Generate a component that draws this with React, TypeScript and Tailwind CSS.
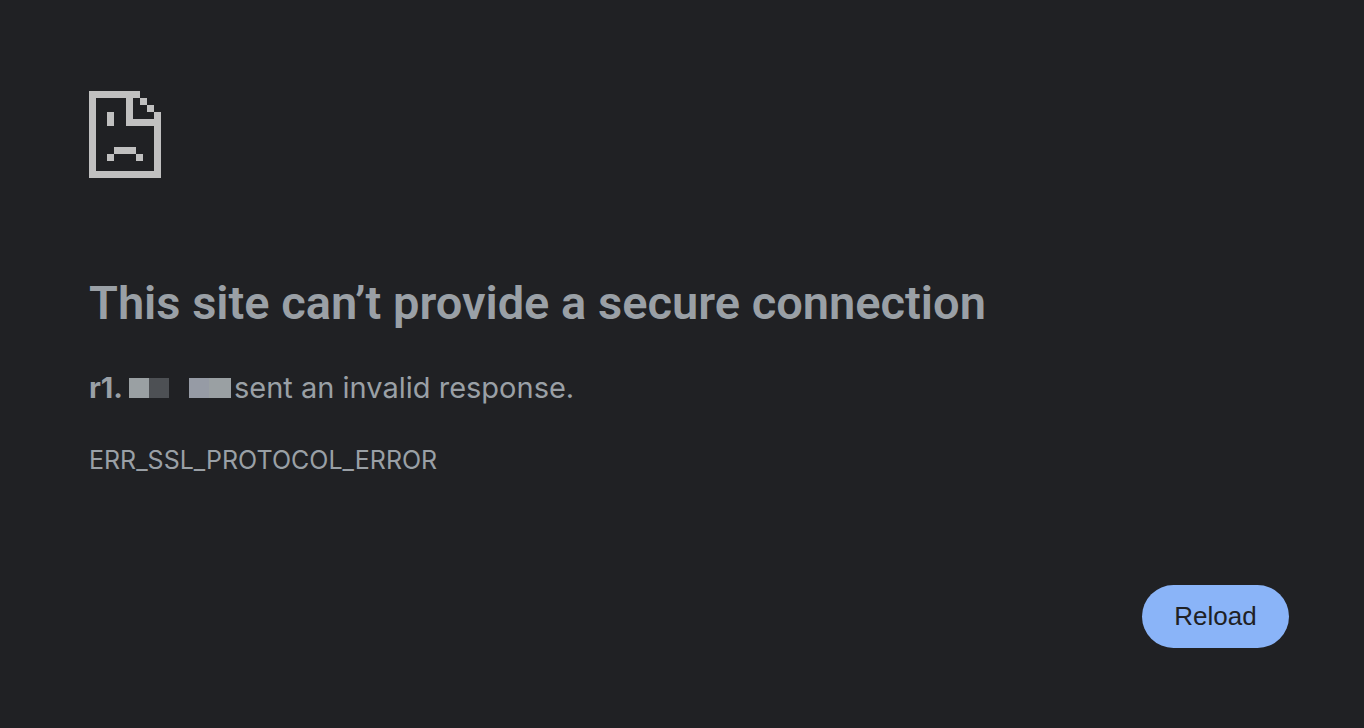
export default function App() {
  return (
    <main className="flex min-h-screen flex-col bg-[#202124] px-[75px] pt-[91px] pb-20 font-['Inter','Liberation_Sans',sans-serif] text-[#9aa0a6]">
      <div className="pl-[14px]">
        <svg viewBox="0 0 72 87" className="h-[87px] w-[72px]" fill="#c0c0c0" shapeRendering="crispEdges" role="img" aria-label="Page error">
          <path d="M0 0H51V7H7V80H65V35H37V7H44V28H65V21H72V87H0Z" />
          <path d="M51 7h7v7h-7zM58 14h7v7h-7zM18 21h7v14h-7zM25 56h22v7h-22zM18 63h7v7h-7zM47 63h7v7h-7z" />
        </svg>
        <h1 className="mt-[95px] font-['Roboto','Liberation_Sans',sans-serif] text-[47px] leading-[60px] font-semibold">This site can’t provide a secure connection</h1>
        <p className="mt-[35px] flex items-center text-[29px] leading-[40px]">
          <strong className="w-9 font-bold">r1.</strong>
          <span className="ml-1 h-5 w-5 bg-[#9aa0a3]" />
          <span className="h-5 w-5 bg-[#4d5054]" />
          <span className="ml-5 h-5 w-5 bg-[#969ba5]" />
          <span className="mr-[3px] h-5 w-[22px] bg-[#9aa0a3]" />
          <span>sent an invalid response.</span>
        </p>
        <p className="mt-9 text-[25px] leading-[32px]">ERR_SSL_PROTOCOL_ERROR</p>
      </div>
      <div className="mt-[109px] flex justify-end">
        <button type="button" className="h-[63px] w-[147px] rounded-full bg-[#8ab4f8] font-['Liberation_Sans',Arial,sans-serif] text-[26px] text-[#202124]">Reload</button>
      </div>
    </main>
  );
}
